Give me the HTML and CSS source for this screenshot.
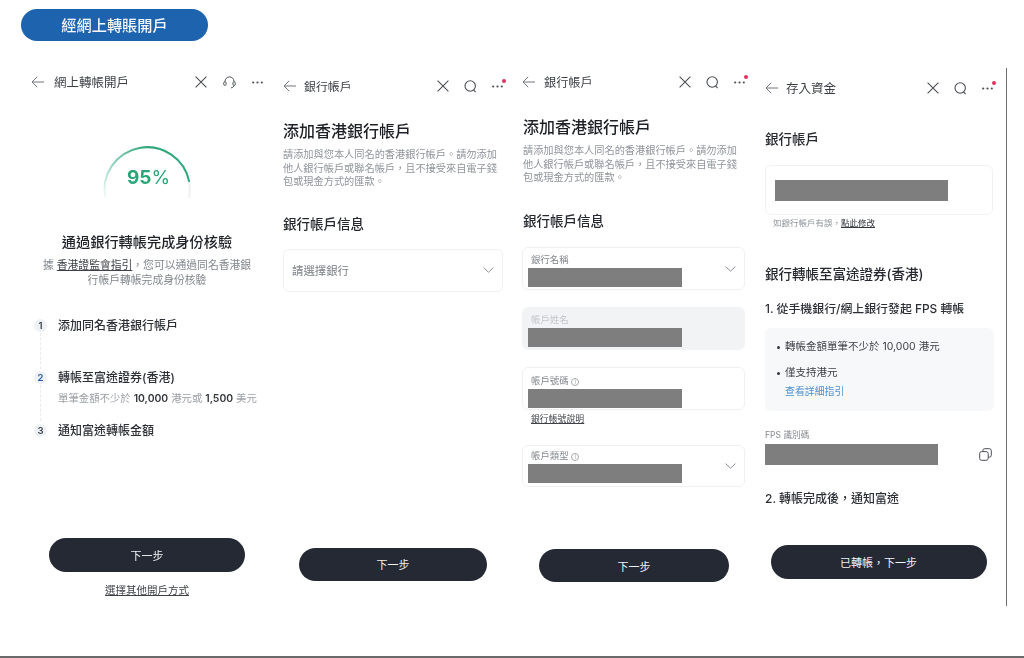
FILE: index.html
```html
<!DOCTYPE html>
<html lang="zh-Hant">
<head>
<meta charset="utf-8">
<title>經網上轉賬開戶</title>
<link rel="stylesheet" href="styles.css">
</head>
<body>
<svg class="defs" width="0" height="0" aria-hidden="true">
  <symbol id="i-back" viewBox="0 0 13 12"><path d="M13 6H1M6.2 .8 1 6l5.2 5.2" fill="none" stroke="currentColor"/></symbol>
  <symbol id="i-close" viewBox="0 0 12 12"><path d="M.6 .6l10.8 10.8M11.4 .6 .6 11.4" fill="none" stroke="currentColor" stroke-width="1.1"/></symbol>
  <symbol id="i-search" viewBox="0 0 13 13"><circle cx="6.2" cy="6" r="5.2" fill="none" stroke="currentColor" stroke-width="1.1"/><path d="M9.6 9.8l2 2.4" fill="none" stroke="currentColor" stroke-width="1.1"/></symbol>
  <symbol id="i-dots" viewBox="0 0 11 3"><circle cx="1.2" cy="1.5" r="1.1" fill="currentColor"/><circle cx="5.5" cy="1.5" r="1.1" fill="currentColor"/><circle cx="9.8" cy="1.5" r="1.1" fill="currentColor"/></symbol>
  <symbol id="i-head" viewBox="0 0 13 13"><path d="M2 6.5V5.4a4.5 4.5 0 0 1 9 0v1.1M11 8.8c0 1.7-1.1 2.9-3 3.1" fill="none" stroke="currentColor"/><rect x=".7" y="5.8" width="2.4" height="3.6" rx="1.2" fill="#fff" stroke="currentColor" stroke-width=".9"/><rect x="9.9" y="5.8" width="2.4" height="3.6" rx="1.2" fill="#fff" stroke="currentColor" stroke-width=".9"/></symbol>
  <symbol id="i-chev" viewBox="0 0 11 6"><path d="M.6 .6 5.5 5.2 10.4 .6" fill="none" stroke="currentColor"/></symbol>
  <symbol id="i-copy" viewBox="0 0 13 13"><rect x="3.8" y=".7" width="8.5" height="8.5" rx="2" fill="none" stroke="currentColor"/><rect x=".7" y="3.6" width="8.5" height="8.7" rx="2" fill="#fff" stroke="currentColor"/></symbol>
</svg>

<header class="top"><h1 class="pill">經網上轉賬開戶</h1></header>

<main class="stage">
  <section class="screen s1">
    <nav class="nav">
      <svg class="ic back"><use href="#i-back"/></svg><span class="nav-title">網上轉帳開戶</span>
      <span class="nav-icons">
        <svg class="ic close"><use href="#i-close"/></svg>
        <svg class="ic head"><use href="#i-head"/></svg>
        <svg class="ic dots"><use href="#i-dots"/></svg>
      </span>
    </nav>
    <div class="gauge">
      <svg class="gauge-arc" viewBox="0 0 100 70">
        <defs><linearGradient id="arcfade" gradientUnits="userSpaceOnUse" x1="8" y1="62" x2="50" y2="6"><stop offset="0" stop-color="#fff"/><stop offset="1" stop-color="#2ea87a"/></linearGradient></defs>
        <path d="M92.3 42 A42.5 42.5 0 0 1 92 58" fill="none" stroke="#eef1f0" stroke-width="2"/>
        <path d="M8.2 58 A42.5 42.5 0 0 1 92.3 42" fill="none" stroke="url(#arcfade)" stroke-width="2"/>
      </svg>
      <span class="gauge-value">95<span class="pct">%</span></span>
    </div>
    <h2 class="intro-title">通過銀行轉帳完成身份核驗</h2>
    <p class="intro-text">據 <u>香港證監會指引</u>&#65292;您可以通過同名香港銀<br>行帳戶轉帳完成身份核驗</p>
    <ol class="steps">
      <li class="step step-a"><span class="num">1</span><span class="step-name">添加同名香港銀行帳戶</span></li>
      <li class="step step-b"><span class="num blue">2</span><span class="step-name">轉帳至富途證券(香港)</span></li>
      <li class="step-note">單筆金額不少於 <b>10,000</b> 港元或 <b>1,500</b> 美元</li>
      <li class="step step-c"><span class="num">3</span><span class="step-name">通知富途轉帳金額</span></li>
    </ol>
    <button class="cta cta1">下一步</button>
    <a class="other">選擇其他開戶方式</a>
  </section>

  <section class="screen s2">
    <nav class="nav">
      <svg class="ic back"><use href="#i-back"/></svg><span class="nav-title">銀行帳戶</span>
      <span class="nav-icons">
        <svg class="ic close"><use href="#i-close"/></svg>
        <svg class="ic search"><use href="#i-search"/></svg>
        <span class="more"><svg class="ic dots"><use href="#i-dots"/></svg><i class="dot"></i></span>
      </span>
    </nav>
    <h2 class="h1">添加香港銀行帳戶</h2>
    <p class="lead">請添加與您本人同名的香港銀行帳戶。請勿添加<br>他人銀行帳戶或聯名帳戶&#65292;且不接受來自電子錢<br>包或現金方式的匯款。</p>
    <h3 class="h2 h2-s2">銀行帳戶信息</h3>
    <div class="select"><span>請選擇銀行</span><svg class="ic chev"><use href="#i-chev"/></svg></div>
    <button class="cta cta2">下一步</button>
  </section>

  <section class="screen s3">
    <nav class="nav">
      <svg class="ic back"><use href="#i-back"/></svg><span class="nav-title">銀行帳戶</span>
      <span class="nav-icons">
        <svg class="ic close"><use href="#i-close"/></svg>
        <svg class="ic search"><use href="#i-search"/></svg>
        <span class="more"><svg class="ic dots"><use href="#i-dots"/></svg><i class="dot"></i></span>
      </span>
    </nav>
    <h2 class="h1">添加香港銀行帳戶</h2>
    <p class="lead">請添加與您本人同名的香港銀行帳戶。請勿添加<br>他人銀行帳戶或聯名帳戶&#65292;且不接受來自電子錢<br>包或現金方式的匯款。</p>
    <h3 class="h2 h2-s3">銀行帳戶信息</h3>
    <div class="field f1"><div class="field-body"><span class="label">銀行名稱</span><span class="mask"></span></div><svg class="ic chev"><use href="#i-chev"/></svg></div>
    <div class="field f2 off"><div class="field-body"><span class="label">帳戶姓名</span><span class="mask"></span></div></div>
    <div class="field f3"><div class="field-body"><span class="label">帳戶號碼 <i class="info">i</i></span><span class="mask"></span></div></div>
    <a class="under">銀行帳號說明</a>
    <div class="field f4"><div class="field-body"><span class="label">帳戶類型 <i class="info">i</i></span><span class="mask"></span></div><svg class="ic chev"><use href="#i-chev"/></svg></div>
    <button class="cta cta3">下一步</button>
  </section>

  <section class="screen s4">
    <nav class="nav">
      <svg class="ic back"><use href="#i-back"/></svg><span class="nav-title">存入資金</span>
      <span class="nav-icons">
        <svg class="ic close"><use href="#i-close"/></svg>
        <svg class="ic search"><use href="#i-search"/></svg>
        <span class="more"><svg class="ic dots"><use href="#i-dots"/></svg><i class="dot"></i></span>
      </span>
    </nav>
    <h3 class="h2 h2-a">銀行帳戶</h3>
    <div class="card"><span class="mask"></span></div>
    <p class="note">如銀行帳戶有誤&#65292;<a class="note-link">點此修改</a></p>
    <h3 class="h2 h2-b">銀行轉帳至富途證券(香港)</h3>
    <p class="sub-step">1. 從手機銀行/網上銀行發起 FPS 轉帳</p>
    <div class="panel">
      <p class="bullet">轉帳金額單筆不少於 10,000 港元</p>
      <p class="bullet b2">僅支持港元</p>
      <a class="more-link">查看詳細指引</a>
    </div>
    <p class="fps-label">FPS 識別碼</p>
    <div class="fps-row"><span class="mask"></span><svg class="ic copy"><use href="#i-copy"/></svg></div>
    <p class="sub-step2">2. 轉帳完成後&#65292;通知富途</p>
    <button class="cta cta4">已轉帳&#65292;下一步</button>
  </section>
</main>
<div class="baseline"></div>
</body>
</html>
```
FILE: styles.css
```css
* { box-sizing: border-box; }
html, body { margin: 0; padding: 0; }
body {
  width: 1024px; height: 658px; overflow: hidden;
  display: flex; flex-direction: column;
  background: #fff; color: #2b2f36;
  font-family: "Inter", "Noto Sans CJK TC", sans-serif;
}
h1, h2, h3, p, ol { margin: 0; padding: 0; }
ol { list-style: none; }
i { font-style: normal; }
.defs { position: absolute; }

.top { height: 68px; padding: 9px 0 0 21px; flex: none; filter: blur(.4px); }
.pill {
  width: 187px; height: 32px; border-radius: 16px;
  background: #1e63ae; color: #f4f7fb;
  font-size: 15.2px; font-weight: 500; line-height: 33px; text-align: center;
}

.stage { display: flex; align-items: flex-start; flex: 1; filter: blur(.4px); }
.screen { display: flex; flex-direction: column; flex: none; }
.s1 { width: 272px; padding: 0 9px 0 31px; }
.s2 { width: 240px; padding: 4px 9px 0 11px; }
.s3 { width: 243px; padding: 0 10px 0 11px; }
.s4 { width: 252px; height: 538px; padding: 6px 12px 0 10px; border-right: 1.5px solid #6f6f6f; }

.nav { display: flex; align-items: center; height: 28px; color: #4a4e54; flex: none; }
.s3 .nav { margin-left: -1px; }
.s4 .nav { padding-right: 1px; }
.nav-title { margin-left: 9px; font-size: 12.2px; line-height: 29px; color: #3a3e44; }
.s1 .nav-title { margin-left: 10px; font-size: 12.5px; }
.s2 .nav-title { margin-left: 8px; font-size: 11.9px; }
.s4 .nav-title { margin-left: 8px; font-size: 12.5px; }
.nav-icons { margin-left: auto; display: flex; align-items: center; gap: 15px; }
.s1 .nav-icons { gap: 16px; }
.ic { display: block; flex: none; }
.back { width: 13px; height: 12px; color: #70757b; }
.close { width: 12px; height: 12px; }
.search { width: 13px; height: 13px; }
.head { width: 13px; height: 13px; }
.dots { width: 11px; height: 3px; }
.more { position: relative; display: block; }
.dot { position: absolute; right: -3px; top: -6px; width: 4px; height: 4px; border-radius: 50%; background: #e0335f; }
.chev { width: 11px; height: 6px; color: #8b8f94; }
.copy { width: 13px; height: 13px; color: #4a4e54; }

/* screen 1 */
.gauge { position: relative; width: 100px; height: 70px; margin: 44px auto 0; }
.gauge-arc { display: block; width: 100px; height: 70px; }
.gauge-value {
  position: absolute; left: 3px; right: 0; top: 24px;
  text-align: center; font-size: 19px; line-height: 28px; font-weight: 700; color: #2aa677;
}
.pct { font-weight: 400; }
.intro-title { margin-top: 22px; text-align: center; font-size: 14.2px; line-height: 20px; font-weight: 500; color: #1f2228; }
.intro-text { margin-top: 6px; text-align: center; font-size: 10.8px; line-height: 15px; color: #82878d; white-space: nowrap; }
.intro-text u { color: #3d4147; }
.steps { margin-top: 28px; }
.step { position: relative; display: flex; align-items: center; gap: 11px; margin-left: 3px; height: 18px; }
.step-b { margin-top: 34px; }
.step-c { margin-top: 15px; }
.num {
  flex: none; width: 13px; height: 13px; border-radius: 50%; background: #eef1f5;
  font-size: 9.5px; line-height: 13px; text-align: center; font-weight: 600; color: #3a3f46;
}
.num.blue { color: #2c5aa0; }
.step-name { font-size: 12px; line-height: 19px; font-weight: 500; color: #2c3036; white-space: nowrap; }
.step-a::after, .step-b::after {
  content: ""; position: absolute; left: 6px; top: 17px; width: 0; height: 36px;
  border-left: 1px dashed #e9ebee;
}
.step-note { margin: 6px 0 0 27px; font-size: 10.4px; line-height: 14px; color: #9ba0a5; white-space: nowrap; }
.step-note b { color: #33373d; font-weight: 600; }
.cta {
  display: block; border: 0; padding: 0; margin-left: auto; margin-right: auto;
  border-radius: 17px; background: #242933; color: #f2f3f5;
  font-family: inherit; font-size: 11px; text-align: center;
}
.cta1 { width: 196px; height: 34px; margin-top: 99px; }
.cta2 { width: 188px; height: 33px; margin-top: 256px; }
.cta3 { width: 190px; height: 33px; margin-top: 62px; }
.cta4 { width: 216px; height: 34px; margin-top: 37px; position: relative; left: -1px; }
.other { margin-top: 12px; text-align: center; font-size: 10.5px; line-height: 14px; color: #3d4147; text-decoration: underline; }

/* forms */
.h1 { font-size: 16px; line-height: 22px; font-weight: 500; color: #1d2026; margin-top: 20px; }
.lead { margin-top: 6px; font-size: 10.2px; line-height: 13.5px; color: #90959b; white-space: nowrap; }
.h2 { font-size: 13.5px; line-height: 20px; font-weight: 500; color: #25282e; }
.h2-s2 { margin-top: 25px; }
.h2-s3 { margin-top: 26.5px; }
.select {
  margin-top: 15px; height: 43px; display: flex; align-items: center; justify-content: space-between;
  padding: 0 8px; border: 1px solid #eef0f2; border-radius: 6px;
  font-size: 11.4px; color: #7a7f84;
}
.field {
  width: 223px; margin-left: -1px; margin-top: 17px; height: 43px;
  display: flex; align-items: center; justify-content: space-between;
  padding: 0 8px 0 5px; border: 1px solid #eef0f2; border-radius: 6px;
}
.field-body { align-self: flex-start; width: 154px; }
.f1 { margin-top: 16px; }
.f1 .field-body, .f2 .field-body { padding-top: 6px; }
.f3 .field-body { padding-top: 7px; }
.f4 { margin-top: 20px; height: 42px; }
.f4 .field-body { padding-top: 4px; }
.off { background: #f1f3f5; border-color: #f1f3f5; }
.off .label { color: #c3c7cb; }
.label { display: block; height: 12px; margin: 0 0 2px 3px; font-size: 9.4px; line-height: 12px; color: #82878c; white-space: nowrap; }
.info {
  display: inline-block; width: 8px; height: 8px; border: 1px solid #a5a9ad; border-radius: 50%;
  font-size: 6px; line-height: 6px; text-align: center; color: #a5a9ad; vertical-align: 0;
}
.mask { display: block; height: 19px; background: #7e7e7e; }
.under { margin: 3px 0 0 8px; font-size: 8.9px; line-height: 12px; color: #3d4147; text-decoration: underline; }

/* screen 4 */
.h2-a { margin-top: 27px; }
.card { margin-top: 16px; height: 50px; display: flex; align-items: center; padding: 0 9px; border: 1px solid #f0f1f3; border-radius: 6px; width: 228px; }
.card .mask { width: 173px; height: 21px; }
.note { margin: 2px 0 0 8px; font-size: 8.5px; line-height: 12px; color: #90959b; white-space: nowrap; }
.note-link { color: #33373d; text-decoration: underline; }
.h2-b { margin-top: 35px; }
.sub-step { margin-top: 16.5px; font-size: 11.9px; line-height: 16px; font-weight: 500; color: #2c3036; white-space: nowrap; }
.panel { margin-top: 11.5px; height: 83px; padding: 10.5px 0 0 20px; background: #f7f8fa; border-radius: 6px; }
.bullet { position: relative; font-size: 10.5px; line-height: 16px; color: #3d4147; white-space: nowrap; }
.bullet::before { content: ""; position: absolute; left: -8px; top: 7px; width: 3px; height: 3px; border-radius: 50%; background: #33373d; }
.b2 { margin-top: 10px; }
.more-link { display: block; margin-top: 3px; font-size: 9.9px; line-height: 14px; color: #4a8fd0; }
.fps-label { margin-top: 18px; font-size: 8.6px; line-height: 12px; color: #82878c; }
.fps-row { margin-top: 3px; display: flex; align-items: center; justify-content: space-between; padding-right: 2px; }
.fps-row .mask { width: 173px; height: 21px; }
.sub-step2 { margin-top: 24.5px; font-size: 12px; line-height: 18px; font-weight: 500; color: #2c3036; white-space: nowrap; }

.baseline { flex: none; height: 2px; background: #6a6a6a; }
```
